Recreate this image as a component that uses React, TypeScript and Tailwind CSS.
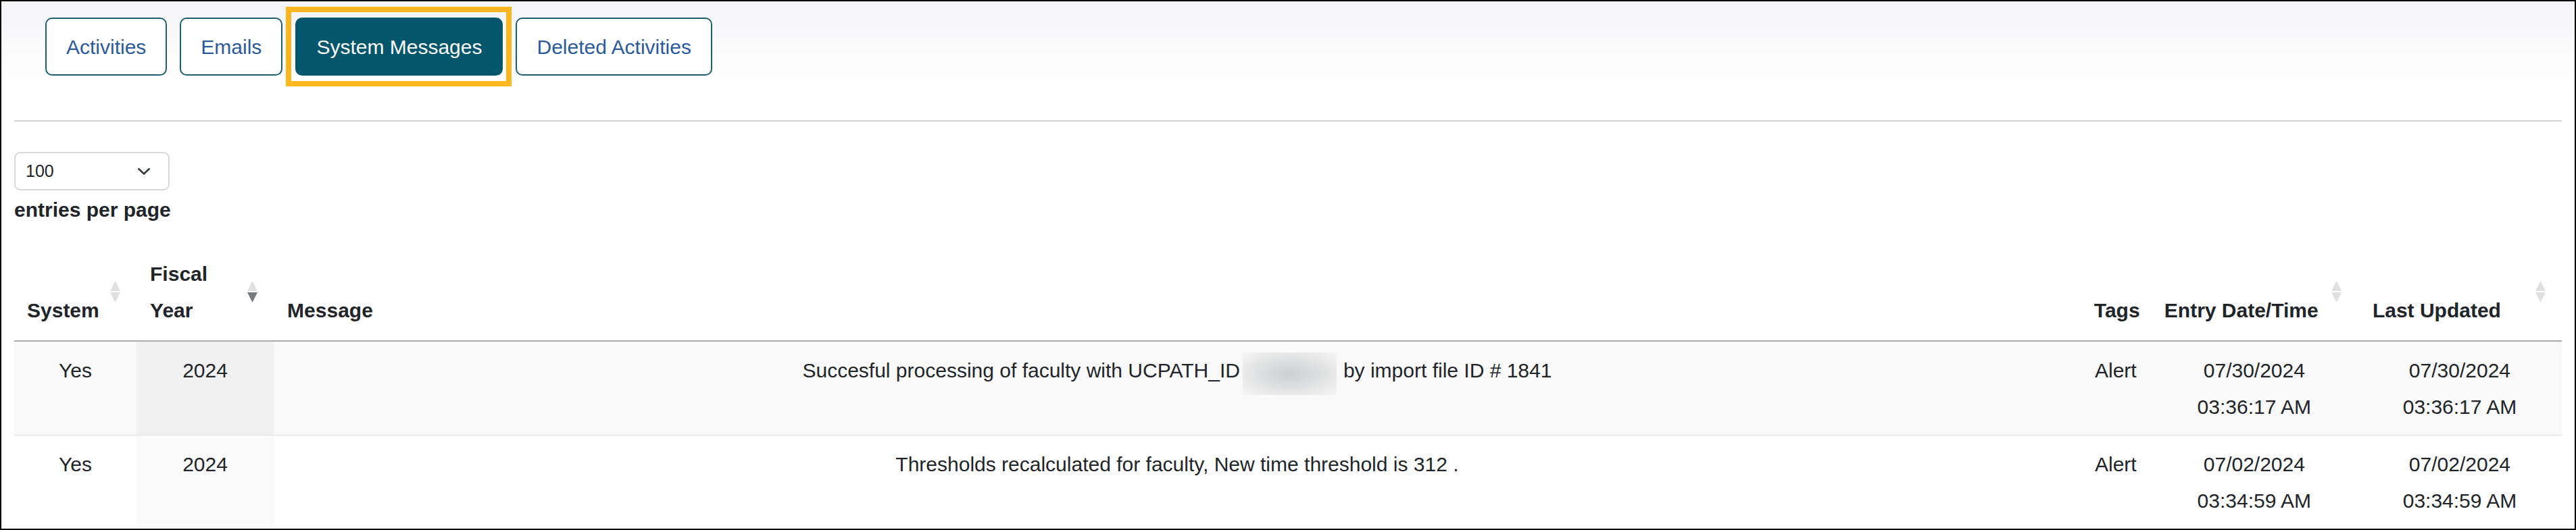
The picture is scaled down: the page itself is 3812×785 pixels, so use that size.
import React from 'react';

const tabs = ['Activities', 'Emails', 'System Messages', 'Deleted Activities'];

const SortIcon: React.FC<{ dir?: 'asc' | 'desc' }> = ({ dir }) => (
    <svg width="15" height="32" viewBox="0 0 15 32" className="absolute right-[24px] top-[53px]">
        <polygon points="7.5,0 15,15 0,15" fill={dir === 'asc' ? '#777a7e' : '#dfe0e1'} />
        <polygon points="0,17 15,17 7.5,32" fill={dir === 'desc' ? '#777a7e' : '#dfe0e1'} />
    </svg>
);

interface Row {
    system: string;
    year: string;
    message: React.ReactNode;
    tags: string;
    entryDate: string;
    entryTime: string;
    updDate: string;
    updTime: string;
}

const rows: Row[] = [
    {
        system: 'Yes',
        year: '2024',
        message: (
            <>
                Succesful processing of faculty with UCPATH_ID
                <span className="inline-block align-top w-[139px] h-[63px] ml-[4px] mr-[10px] bg-[radial-gradient(ellipse_at_center,#cdcecf_0%,#dedfe0_45%,#f0f0f0_85%,#f5f5f5_100%)]" />
                by import file ID # 1841
            </>
        ),
        tags: 'Alert',
        entryDate: '07/30/2024',
        entryTime: '03:36:17 AM',
        updDate: '07/30/2024',
        updTime: '03:36:17 AM',
    },
    {
        system: 'Yes',
        year: '2024',
        message: 'Thresholds recalculated for faculty, New time threshold is 312 .',
        tags: 'Alert',
        entryDate: '07/02/2024',
        entryTime: '03:34:59 AM',
        updDate: '07/02/2024',
        updTime: '03:34:59 AM',
    },
];

export default function App() {
    return (
        <div className="w-[3812px] h-[785px] overflow-hidden border-2 border-black bg-white text-[#212529] font-['Liberation_Sans',Arial,sans-serif]">
            <div className="bg-linear-to-b from-[#f4f4f7] to-white to-[70%] pl-[65px] pt-[24px] pb-[66px]">
                <div className="flex gap-[19px]">
                    {tabs.map((t) =>
                        t === 'System Messages' ? (
                            <div key={t} className="relative">
                                <div className="absolute -left-[14px] -right-[13px] -top-[16px] -bottom-[16px] border-[8px] border-[#fbb61f]" />
                                <button className="relative h-[86px] px-[29px] rounded-[10px] border-2 border-[#03566b] bg-[#03566b] text-white text-[30px]">
                                    {t}
                                </button>
                            </div>
                        ) : (
                            <button
                                key={t}
                                className="h-[86px] px-[29px] rounded-[10px] border-2 border-[#1c5f73] bg-white text-[#2b5a9c] text-[30px]"
                            >
                                {t}
                            </button>
                        )
                    )}
                </div>
            </div>

            <div className="px-[19px]">
                <div className="border-t-2 border-[#d2d2d2]" />

                <div className="mt-[45px] w-[230px] h-[57px] rounded-[9px] border-2 border-[#d6d8db] flex items-center justify-between pl-[15px] pr-[26px] text-[25px]">
                    <span>100</span>
                    <svg width="20" height="11" viewBox="0 0 20 11">
                        <polyline points="1.5,1.5 10,9.5 18.5,1.5" fill="none" stroke="#343a40" strokeWidth="2.6" />
                    </svg>
                </div>
                <div className="mt-[12px] text-[30px] leading-[34px] font-bold">entries per page</div>

                <table className="mt-[35px] w-[3770px] table-fixed border-collapse text-[30px] leading-[54px]">
                    <colgroup>
                        <col className="w-[181px]" />
                        <col className="w-[203px]" />
                        <col className="w-[2673px]" />
                        <col className="w-[104px]" />
                        <col className="w-[306px]" />
                        <col className="w-[302px]" />
                    </colgroup>
                    <thead>
                        <tr className="border-b-2 border-[#ababab]">
                            <th className="relative text-left align-bottom font-bold pl-[19px] pt-[16px] pb-[17px]">
                                System
                                <SortIcon />
                            </th>
                            <th className="relative text-left align-bottom font-bold pl-[20px] pt-[16px] pb-[17px]">
                                Fiscal
                                <br />
                                Year
                                <SortIcon dir="desc" />
                            </th>
                            <th className="text-left align-bottom font-bold pl-[20px] pt-[16px] pb-[17px]">Message</th>
                            <th className="text-left align-bottom font-bold pl-[20px] pt-[16px] pb-[17px]">Tags</th>
                            <th className="relative text-left align-bottom font-bold pl-[20px] pt-[16px] pb-[17px] whitespace-nowrap">
                                Entry Date/Time
                                <SortIcon />
                            </th>
                            <th className="relative text-left align-bottom font-bold pl-[22px] pt-[16px] pb-[17px] whitespace-nowrap">
                                Last Updated
                                <SortIcon />
                            </th>
                        </tr>
                    </thead>
                    <tbody>
                        {rows.map((r, i) => (
                            <tr
                                key={i}
                                className={`border-b border-[#dee2e6] text-center align-top ${i % 2 === 0 ? 'bg-[#f9f9f9]' : 'bg-white'}`}
                            >
                                <td className="pt-[16px] pb-[14px]">{r.system}</td>
                                <td className={`pt-[16px] pb-[14px] ${i % 2 === 0 ? 'bg-[#f1f1f1]' : 'bg-[#fafafa]'}`}>{r.year}</td>
                                <td className="pt-[16px] pb-[14px]">{r.message}</td>
                                <td className="pt-[16px] pb-[14px]">{r.tags}</td>
                                <td className="pt-[16px] pb-[14px]">
                                    {r.entryDate}
                                    <br />
                                    {r.entryTime}
                                </td>
                                <td className="pt-[16px] pb-[14px]">
                                    {r.updDate}
                                    <br />
                                    {r.updTime}
                                </td>
                            </tr>
                        ))}
                    </tbody>
                </table>
            </div>
        </div>
    );
}
